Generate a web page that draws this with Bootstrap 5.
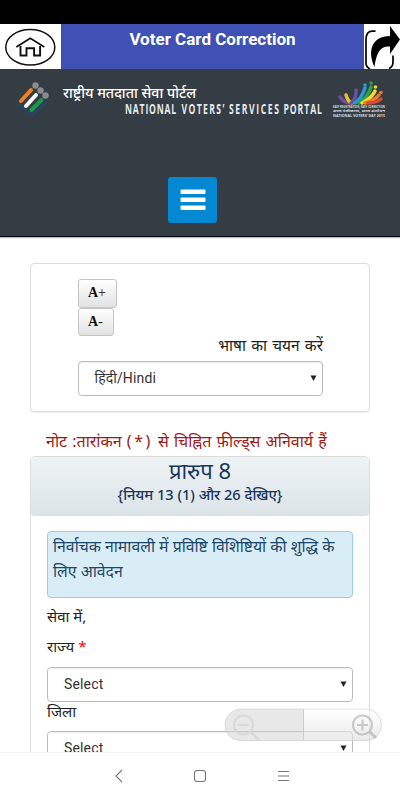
<!DOCTYPE html>
<html lang="hi">
<head>
<meta charset="utf-8">
<meta name="viewport" content="width=device-width, initial-scale=1">
<title>Voter Card Correction</title>
<link href="https://cdn.jsdelivr.net/npm/bootstrap@5.3.0/dist/css/bootstrap.min.css" rel="stylesheet">
<style>
body{font-family:"Noto Sans",Roboto,sans-serif;width:400px;height:800px;overflow:hidden;color:#222}
.screen{height:800px}
.status{height:24px}
.appbar{height:45px;background:#3f51b5}
.home-btn{width:61px}
.share-btn{width:36px}
.apptitle{font:700 17px/30px Roboto,sans-serif}
.masthead{height:168px;background:#343c44;border-bottom:1px solid #050a20;box-shadow:0 1px 1px #bbb}
.logo-row{height:56px;padding:9px 14px 0 15px}
.brand-text{width:259px;margin-left:14px}
.brand-hi{font-size:14.2px;font-weight:500;line-height:20px;margin-top:5px;white-space:nowrap}
.brand-en{font:700 13.5px/14px "Open Sans",sans-serif;margin-top:-2px;overflow:visible}
.menu-btn{width:49px;height:46px;margin:52px 0 0 168px;background:#0488d1;border-radius:3px}
.web{height:515px;overflow:hidden;padding:26px 30px 0 30px}
.lang-box{height:149px;border:1px solid #ddd;border-radius:4px;padding:15px 46px 0 46.5px;box-shadow:0 1px 1px #eee}
.size-btn{font:700 14px/26px "Liberation Serif",serif;height:28.5px;border:1px solid #c5c5c5;border-radius:3px;background:linear-gradient(#fff,#e2e2e2);padding:0;color:#111;width:39px}
.size-btn span{font-weight:400}
.size-btn.less{width:36px}
.lang-label{font-size:15.4px;word-spacing:1.3px;line-height:19px;height:25px;white-space:nowrap}
.picker{height:35px;border:1px solid #bbb;border-radius:4px;box-shadow:inset 0 1px 1px #eee;padding:0 4px 1px 16px;font-family:Roboto,"Noto Sans",sans-serif;font-size:14px;letter-spacing:.15px;color:#333}
.note{color:#a01818;font-size:16px;word-spacing:1px;line-height:24px;height:27px;margin:17px 0 0 16px;white-space:nowrap}
.note .star{letter-spacing:2.5px}
.form-box{border:1px solid #ddd;border-radius:5px;height:400px}
.form-head{height:59px;background:linear-gradient(#eef3f5,#dce4e8);border-bottom:1px solid #ddd;border-radius:4px;color:#17365c;white-space:nowrap}
.form-title{font-size:22px;line-height:26px}
.form-rule{font-size:14.6px;font-weight:500;line-height:23px}
.form-part{padding:15px 16px 0}
.info{height:67px;background:#d9edf7;border:1px solid #9acfea;border-radius:4px;color:#1c4667;font-size:15.8px;line-height:25px;padding:2px 5px;white-space:nowrap}
.field-label{font-size:15px;line-height:29px;height:30px;white-space:nowrap}
.field-label.district{height:29px;line-height:19px}
.state-picker{margin-top:5px}
.asterisk{color:#f00}
.nav-strip{height:48px;background:#fff;border-top:1px solid #f4f4f4}
.zoomer{left:224px;top:708px}
</style>
<script src="https://cdn.jsdelivr.net/npm/bootstrap@5.3.0/dist/js/bootstrap.bundle.min.js"></script>
</head>
<body class="m-0 bg-white">
<div class="screen d-flex flex-column position-relative overflow-hidden">
<div class="status bg-black flex-shrink-0"></div>
<header class="appbar d-flex flex-shrink-0">
<a class="home-btn bg-white d-block" href="#" aria-label="Home"><svg class="d-block" width="61" height="45" viewBox="0 0 61 45"><g fill="none" stroke="#111"><ellipse cx="30.3" cy="23.3" rx="24.5" ry="17.8" stroke-width="1.5"/><path d="M16.300 23 30.300 14.300 44.300 23" stroke-width="1.700"/><path d="M20.500 22v9.500h6v-7.300h7.600v7.300h6V22" stroke-width="1.900"/></g></svg></a>
<div class="apptitle flex-grow-1 text-center text-white">Voter Card Correction</div>
<a class="share-btn bg-white d-block" href="#" aria-label="Share"><svg class="d-block" width="36" height="45" viewBox="0 0 36 45"><path d="M26 2 36 15.500 26 30v-7.500c-8-.6-13 3-15.500 20.500C3 27 8 12 26 12z" fill="#000"/><path d="M11.500 7.200H8Q2 7.500 2 16v23q0 4 4 6M29 31.500V38q0 5-4 6.500" fill="none" stroke="#000" stroke-width="1.700"/></svg></a>
</header>
<div class="masthead flex-shrink-0">
<div class="logo-row d-flex">
<svg class="flex-shrink-0" width="34" height="40" viewBox="0 0 34 40"><path d="m1 24 16 14 16-15" fill="none" stroke="#244568" stroke-width="2"/><g stroke-width="4" stroke-linecap="round"><path d="M6 23 16 12" stroke="#f18222"/><path d="m11 28 10-11" stroke="#fff"/><path d="m16.500 32 10-10" stroke="#16994a"/></g><g fill="#8b8b8b"><circle cx="20.500" cy="7.500" r="3.200"/><circle cx="25.500" cy="12.500" r="3.200"/><circle cx="30.500" cy="17.500" r="3.200"/></g></svg>
<div class="brand-text text-white flex-shrink-0">
<div class="brand-hi">राष्ट्रीय मतदाता सेवा पोर्टल</div>
<svg class="d-block brand-en" width="259" height="17" viewBox="0 0 259 17"><g fill="#e8eaec"><text transform="translate(62 13) scale(.64 1)" textLength="80" lengthAdjust="spacing">NATIONAL</text><text transform="translate(118.500 13) scale(.64 1)" textLength="67" lengthAdjust="spacing">VOTERS’</text><text transform="translate(166 13) scale(.64 1)" textLength="78" lengthAdjust="spacing">SERVICES</text><text transform="translate(220.500 13) scale(.64 1)" textLength="60" lengthAdjust="spacing">PORTAL</text></g></svg>
</div>
<svg class="flex-shrink-0 ms-2" width="60" height="40" viewBox="0 0 60 40"><g fill="none" stroke-linecap="round" stroke-width="3.500"><path d="M20 25Q14 25 10 19" stroke="#704da2"/><path d="M22 25Q18 24 16 17" stroke="#e8bd30"/><path d="M21 25Q26 21 26 14" stroke="#6751a4"/><path d="M25 25q7-5 10-15" stroke="#279bd8"/><path d="M29 25q9-6 12-16" stroke="#2ba34a"/><path d="M32 25q10-5 13-12" stroke="#f6d630"/><path d="M35 25q10-3 14-8" stroke="#ef7925"/><path d="M38 25q8 0 13-4" stroke="#d64a36"/></g><g><circle cx="26" cy="12" r="1.800" fill="#6751a4"/><circle cx="35" cy="7" r="1.800" fill="#279bd8"/><circle cx="41" cy="5" r="1.800" fill="#2ba34a"/><circle cx="45.500" cy="9" r="1.800" fill="#f6d630"/><circle cx="51" cy="14.500" r="1.800" fill="#ef7925"/></g><g fill="#ddd" font-family="Open Sans,sans-serif" font-weight="700"><text x="3" y="30" font-size="3.500" textLength="52" lengthAdjust="spacingAndGlyphs">EASY REGISTRATION, EASY CORRECTION</text><text x="3" y="34.400" font-size="3" textLength="52" lengthAdjust="spacingAndGlyphs" font-family="Noto Sans,sans-serif">सरल पंजीकरण, सरल संशोधन</text><text x="3" y="38.800" font-size="3.500" textLength="52" lengthAdjust="spacingAndGlyphs">NATIONAL VOTERS’ DAY 2015</text></g></svg>
</div>
<button class="menu-btn btn border-0 p-0 d-flex align-items-center justify-content-center" aria-label="Menu" type="button"><svg width="26" height="22" viewBox="0 0 26 22" fill="#fff"><rect x=".5" y=".5" width="25" height="4.500" rx="1"/><rect x=".5" y="8.500" width="25" height="4.500" rx="1"/><rect x=".5" y="16.500" width="25" height="4.500" rx="1"/></svg></button>
</div>
<main class="web flex-shrink-0">
<section class="lang-box">
<div class="d-flex flex-column align-items-start"><button class="size-btn" type="button">A<span>+</span></button><button class="size-btn less" type="button">A<span>-</span></button></div>
<div class="lang-label text-end">भाषा का चयन करें</div>
<div class="picker d-flex align-items-center justify-content-between"><span>हिंदी/Hindi</span><svg width="9" height="8" viewBox="0 0 9 8"><path d="M1.500 1.500h6L4.500 7z" fill="#222"/></svg></div>
</section>
<div class="note">नोट :तारांकन <span class="star">(*)</span> से चिह्नित फ़ील्ड्स अनिवार्य हैं</div>
<section class="form-box">
<div class="form-head text-center"><div class="form-title">प्रारुप 8</div><div class="form-rule">{नियम 13 (1) और 26 देखिए}</div></div>
<div class="form-part">
<div class="info">निर्वाचक नामावली में प्रविष्टि विशिष्टियों की शुद्धि के<br>लिए आवेदन</div>
<div class="field-label mt-1">सेवा में,</div>
<div class="field-label">राज्य <span class="asterisk">*</span></div>
<div class="picker state-picker d-flex align-items-center justify-content-between"><span>Select</span><svg width="9" height="8" viewBox="0 0 9 8"><path d="M1.500 1.500h6L4.500 7z" fill="#222"/></svg></div>
<div class="field-label district">जिला</div>
<div class="picker d-flex align-items-center justify-content-between"><span>Select</span><svg width="9" height="8" viewBox="0 0 9 8"><path d="M1.500 1.500h6L4.500 7z" fill="#222"/></svg></div>
</div>
</section>
</main>
<nav class="nav-strip flex-shrink-0 d-flex justify-content-center align-items-center"><svg width="180" height="20" viewBox="0 0 180 20" fill="none" stroke="#777" stroke-width="1.100"><path d="m12 3-6 6 6 6"/><rect x="84.500" y="3.500" width="11" height="11" rx="2.500"/><path d="M168 4.500h11M168 9h11M168 13.500h11"/></svg></nav>
<svg class="zoomer position-absolute" width="159" height="34" viewBox="0 0 159 34"><defs><linearGradient id="pill" x2="0" y2="1"><stop stop-color="#fff" stop-opacity=".5"/><stop offset="1" stop-color="#ddd" stop-opacity=".65"/></linearGradient></defs><path d="M79.500 1H17a16 16 0 0 0 0 32h62.500z" fill="#d5d5d5" fill-opacity=".55"/><path d="M79.500 1H142a16 16 0 0 1 0 32H79.500z" fill="url(#pill)"/><rect x="1" y="1" width="156.500" height="31.500" rx="15.700" fill="none" stroke="#ccc" stroke-opacity=".6"/><path d="M79.500 1v31" stroke="#ccc"/><g fill="none" stroke="#d9d9d9" stroke-width="2.200"><circle cx="19.500" cy="17" r="9.500"/><path d="M14 17h11"/><path d="m27 24 8 8" stroke-width="3"/></g><g fill="none" stroke="#aaa" stroke-opacity=".6" stroke-width="2.200"><circle cx="138.500" cy="17" r="9.500"/><path d="M133 17h11M138.500 11.500v11"/><path d="m146 24 6 6" stroke-width="3"/></g></svg>
</div>
</body>
</html>
